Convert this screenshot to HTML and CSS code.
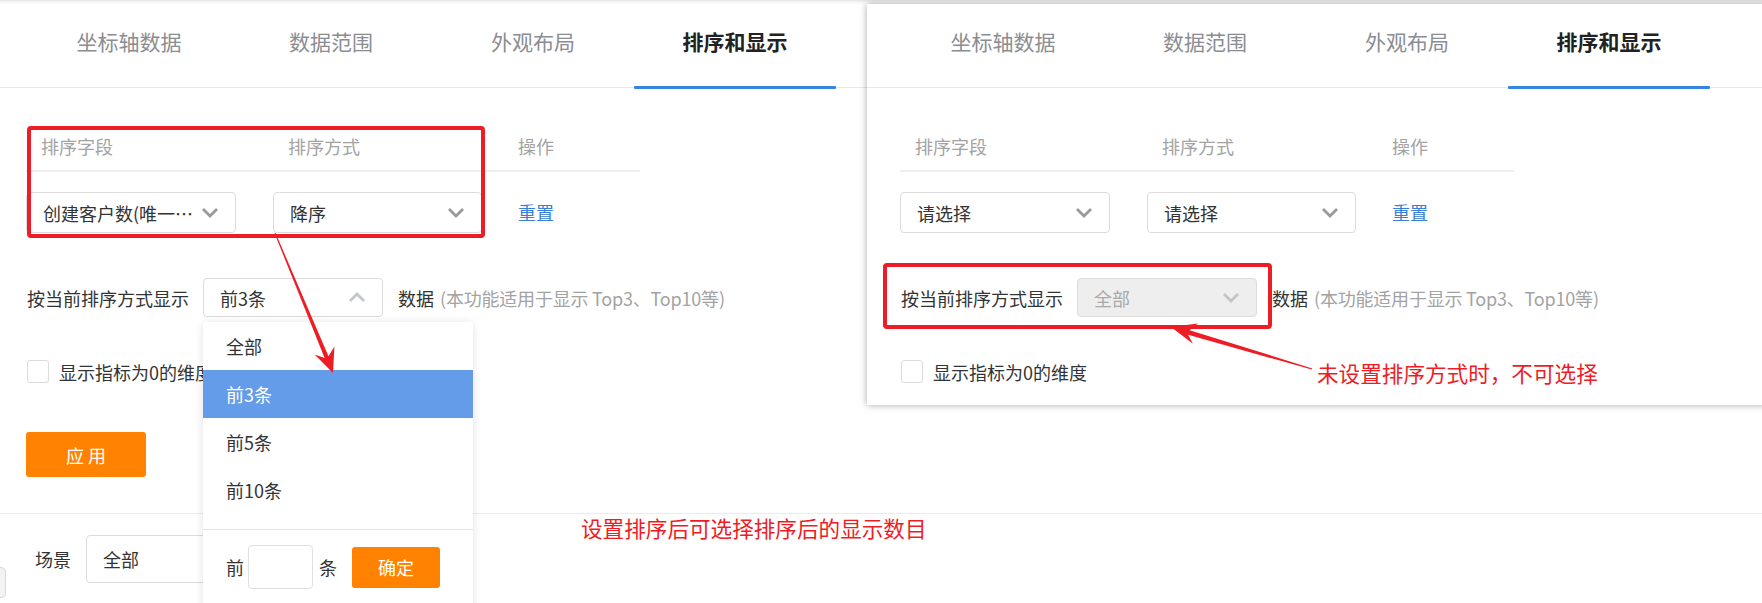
FILE: index.html
```html
<!DOCTYPE html>
<html lang="zh-CN">
<head>
<meta charset="utf-8">
<title>排序和显示</title>
<link rel="stylesheet" href="styles.css">
</head>
<body>
<div class="page">
  <nav class="tabs">
    <div class="tab">坐标轴数据</div>
    <div class="tab">数据范围</div>
    <div class="tab">外观布局</div>
    <div class="tab active">排序和显示</div>
  </nav>
  <section class="panel">
    <div class="sort-table">
      <div class="th">排序字段</div>
      <div class="th">排序方式</div>
      <div class="th">操作</div>
      <div class="td"><div class="select sel-field"><span class="val">创建客户数(唯一…</span><svg class="chev" viewBox="0 0 18 11"><polyline points="2,2 9,9 16,2"/></svg></div></div>
      <div class="td"><div class="select sel-order"><span class="val">降序</span><svg class="chev" viewBox="0 0 18 11"><polyline points="2,2 9,9 16,2"/></svg></div></div>
      <div class="td op"><a class="link">重置</a></div>
    </div>
    <div class="show-row">
      <span class="label">按当前排序方式显示</span>
      <div class="select sel-top"><span class="val">前3条</span><svg class="chev up" viewBox="0 0 18 11"><polyline points="2,9 9,2 16,9"/></svg></div>
      <span class="unit">数据</span><span class="hint">(本功能适用于显示 Top3、Top10等)</span>
    </div>
    <div class="check-row"><span class="checkbox"></span><span class="check-label">显示指标为0的维度</span></div>
    <button class="btn-apply">应 用</button>
  </section>
  <footer class="scene">
    <span class="scene-label">场景</span>
    <div class="select sel-scene"><span class="val">全部</span></div>
  </footer>
  <div class="edge-handle"></div>

  <div class="dropdown">
    <ul class="dd-list">
      <li class="dd-item">全部</li>
      <li class="dd-item selected">前3条</li>
      <li class="dd-item">前5条</li>
      <li class="dd-item">前10条</li>
    </ul>
    <div class="dd-custom">
      <span>前</span><span class="dd-input"></span><span>条</span>
      <button class="btn-ok">确定</button>
    </div>
  </div>

  <div class="card">
    <div class="card-inner">
      <nav class="tabs card-tabs">
        <div class="tab">坐标轴数据</div>
        <div class="tab">数据范围</div>
        <div class="tab">外观布局</div>
        <div class="tab active">排序和显示</div>
      </nav>
      <section class="panel">
        <div class="sort-table">
          <div class="th">排序字段</div>
          <div class="th">排序方式</div>
          <div class="th">操作</div>
          <div class="td"><div class="select sel-field"><span class="val">请选择</span><svg class="chev" viewBox="0 0 18 11"><polyline points="2,2 9,9 16,2"/></svg></div></div>
          <div class="td"><div class="select sel-order"><span class="val">请选择</span><svg class="chev" viewBox="0 0 18 11"><polyline points="2,2 9,9 16,2"/></svg></div></div>
          <div class="td op"><a class="link">重置</a></div>
        </div>
        <div class="show-row">
          <span class="label">按当前排序方式显示</span>
          <div class="select sel-top disabled"><span class="val">全部</span><svg class="chev" viewBox="0 0 18 11"><polyline points="2,2 9,9 16,2"/></svg></div>
          <span class="unit">数据</span><span class="hint">(本功能适用于显示 Top3、Top10等)</span>
        </div>
        <div class="check-row"><span class="checkbox"></span><span class="check-label">显示指标为0的维度</span></div>
      </section>
    </div>
  </div>

  <svg class="annot" viewBox="0 0 1762 603" width="1762" height="603">
    <rect x="29" y="128" width="454" height="108" rx="2" class="rbox"/>
    <rect x="885" y="265" width="385" height="62" rx="2" class="rbox"/>
    <polygon class="rarrow" points="274.5,233.2 324.6,357.9 314.6,354.6 333,373 334.4,346.6 328.5,356.3 275.5,232.8"/>
    <polygon class="rarrow" points="1312.2,368.4 1189.6,330.2 1197.9,323.5 1171,327 1192.9,343.8 1188.1,334.8 1311.8,369.6"/>
  </svg>
  <p class="note note-left">设置排序后可选择排序后的显示数目</p>
  <p class="note note-right">未设置排序方式时，不可选择</p>
</div>
</body>
</html>
```

FILE: styles.css
```css
* { box-sizing: border-box; }
html, body { margin: 0; padding: 0; background: #fff; }
body {
  font-family: "Noto Sans CJK SC", "Microsoft YaHei", "Noto Sans", sans-serif;
  color: #333;
}
.page {
  position: relative;
  width: 1762px;
  height: 603px;
  overflow: hidden;
  background: #fff;
}

/* tabs */
.tabs {
  display: flex;
  height: 88px;
  padding-left: 28px;
  border-bottom: 1px solid #e8e8e8;
  background: linear-gradient(to bottom, #e4e4e4 0, #f6f6f6 2px, #fff 5px);
}
.tab {
  position: relative;
  width: 202px;
  padding-top: 26px;
  text-align: center;
  font-size: 21px;
  line-height: 30px;
  color: #8a8d92;
}
.tab.active {
  color: #222;
  font-weight: bold;
}
.tab.active::after {
  content: "";
  position: absolute;
  left: 0;
  right: 0;
  bottom: -2px;
  height: 3px;
  border-radius: 1px;
  background: #3586e2;
}

/* panel */
.panel {
  padding: 34px 0 0 26px;
}
.sort-table {
  display: grid;
  grid-template-columns: 247px 230px 137px;
  width: 614px;
}
.th {
  height: 50px;
  line-height: 48px;
  padding-left: 15px;
  font-size: 18px;
  color: #a3a3a3;
  border-bottom: 2px solid #eeeeee;
}
.td {
  padding-top: 20px;
}
.td.op {
  padding-left: 15px;
  line-height: 41px;
}
.link {
  font-size: 18px;
  color: #3a80d8;
  text-decoration: none;
}

.select {
  display: flex;
  align-items: center;
  justify-content: space-between;
  height: 41px;
  padding: 0 16px 0 16px;
  border: 1px solid #dcdcdc;
  border-radius: 4px;
  background: #fff;
  font-size: 18px;
  color: #333;
}
.select .val {
  white-space: nowrap;
}
.chev {
  width: 18px;
  height: 11px;
  flex: none;
}
.chev polyline {
  fill: none;
  stroke: #9a9a9a;
  stroke-width: 2.8;
}
.chev.up polyline { stroke: #c2c7cc; }
.sel-field { width: 210px; }
.sel-order { width: 209px; }

/* show row */
.show-row {
  display: flex;
  align-items: center;
  height: 39px;
  margin-top: 44px;
  font-size: 18px;
}
.show-row .label { padding-left: 1px; }
.sel-top {
  width: 180px;
  height: 39px;
  margin-left: 14px;
}
.sel-top.disabled {
  background: #eeeeee;
  border-color: #dddddd;
  color: #a9a9a9;
}
.sel-top.disabled .chev polyline { stroke: #c4c4c4; }
.unit { margin-left: 15px; }
.hint { margin-left: 6px; color: #a3a3a3; letter-spacing: -0.2px; }

.check-row {
  display: flex;
  align-items: center;
  height: 23px;
  margin-top: 43px;
  font-size: 18px;
}
.checkbox {
  width: 22px;
  height: 23px;
  margin-left: 1px;
  border: 1px solid #dcdcdc;
  border-radius: 3px;
  background: #fff;
}
.check-label { margin-left: 10px; }

.btn-apply {
  display: block;
  width: 120px;
  height: 45px;
  margin-top: 49px;
  border: 0;
  border-radius: 3px;
  background: #ff8200;
  color: #fff;
  font-family: inherit;
  font-size: 18px;
}

/* footer */
.scene {
  display: flex;
  align-items: center;
  height: 91px;
  margin-top: 36px;
  padding-left: 35px;
  border-top: 1px solid #ececec;
  border-bottom: 1px solid #e4e4e4;
  font-size: 18px;
}
.sel-scene {
  width: 200px;
  height: 48px;
  margin-left: 15px;
}
.edge-handle {
  position: absolute;
  left: -20px;
  top: 567px;
  width: 26px;
  height: 31px;
  border: 1px solid #d8d8d8;
  border-radius: 5px;
  background: #f3f3f3;
}

/* dropdown popup */
.dropdown {
  position: absolute;
  left: 203px;
  top: 322px;
  width: 270px;
  height: 300px;
  background: #fff;
  border-radius: 4px;
  box-shadow: 0 1px 10px rgba(0, 0, 0, 0.12);
}
.dd-list {
  list-style: none;
  margin: 0;
  padding: 0 0 15px 0;
  border-bottom: 1px solid #e6e6e6;
}
.dd-item {
  height: 48px;
  line-height: 48px;
  padding-left: 23px;
  font-size: 18px;
  color: #333;
}
.dd-item.selected {
  background: #659ce9;
  color: #fff;
}
.dd-custom {
  display: flex;
  align-items: center;
  height: 44px;
  margin-top: 15px;
  padding-left: 23px;
  font-size: 18px;
}
.dd-input {
  width: 65px;
  height: 44px;
  margin: 0 6px 0 4px;
  border: 1px solid #e0e0e0;
  border-radius: 4px;
}
.btn-ok {
  width: 88px;
  height: 41px;
  margin-left: 15px;
  border: 0;
  border-radius: 3px;
  background: #ff8200;
  color: #fff;
  font-family: inherit;
  font-size: 18px;
}

/* pasted card */
.card {
  position: absolute;
  left: 867px;
  top: 4px;
  width: 900px;
  height: 401px;
  overflow: hidden;
  background: #fff;
  box-shadow: 0 0 7px rgba(0, 0, 0, 0.35);
}
.card-inner {
  margin: -4px 0 0 7px;
}
.card .card-tabs {
  margin-left: -7px;
  padding-left: 35px;
  background: none;
}

/* annotations */
.annot {
  position: absolute;
  left: 0;
  top: 0;
  pointer-events: none;
}
.rbox {
  fill: none;
  stroke: #ee1c25;
  stroke-width: 4;
}
.rarrow {
  fill: #ee1c25;
}
.note {
  position: absolute;
  margin: 0;
  font-size: 21.6px;
  line-height: 30px;
  color: #ee1c25;
  white-space: nowrap;
}
.note-left { left: 581px; top: 513px; }
.note-right { left: 1317px; top: 358px; }
```
